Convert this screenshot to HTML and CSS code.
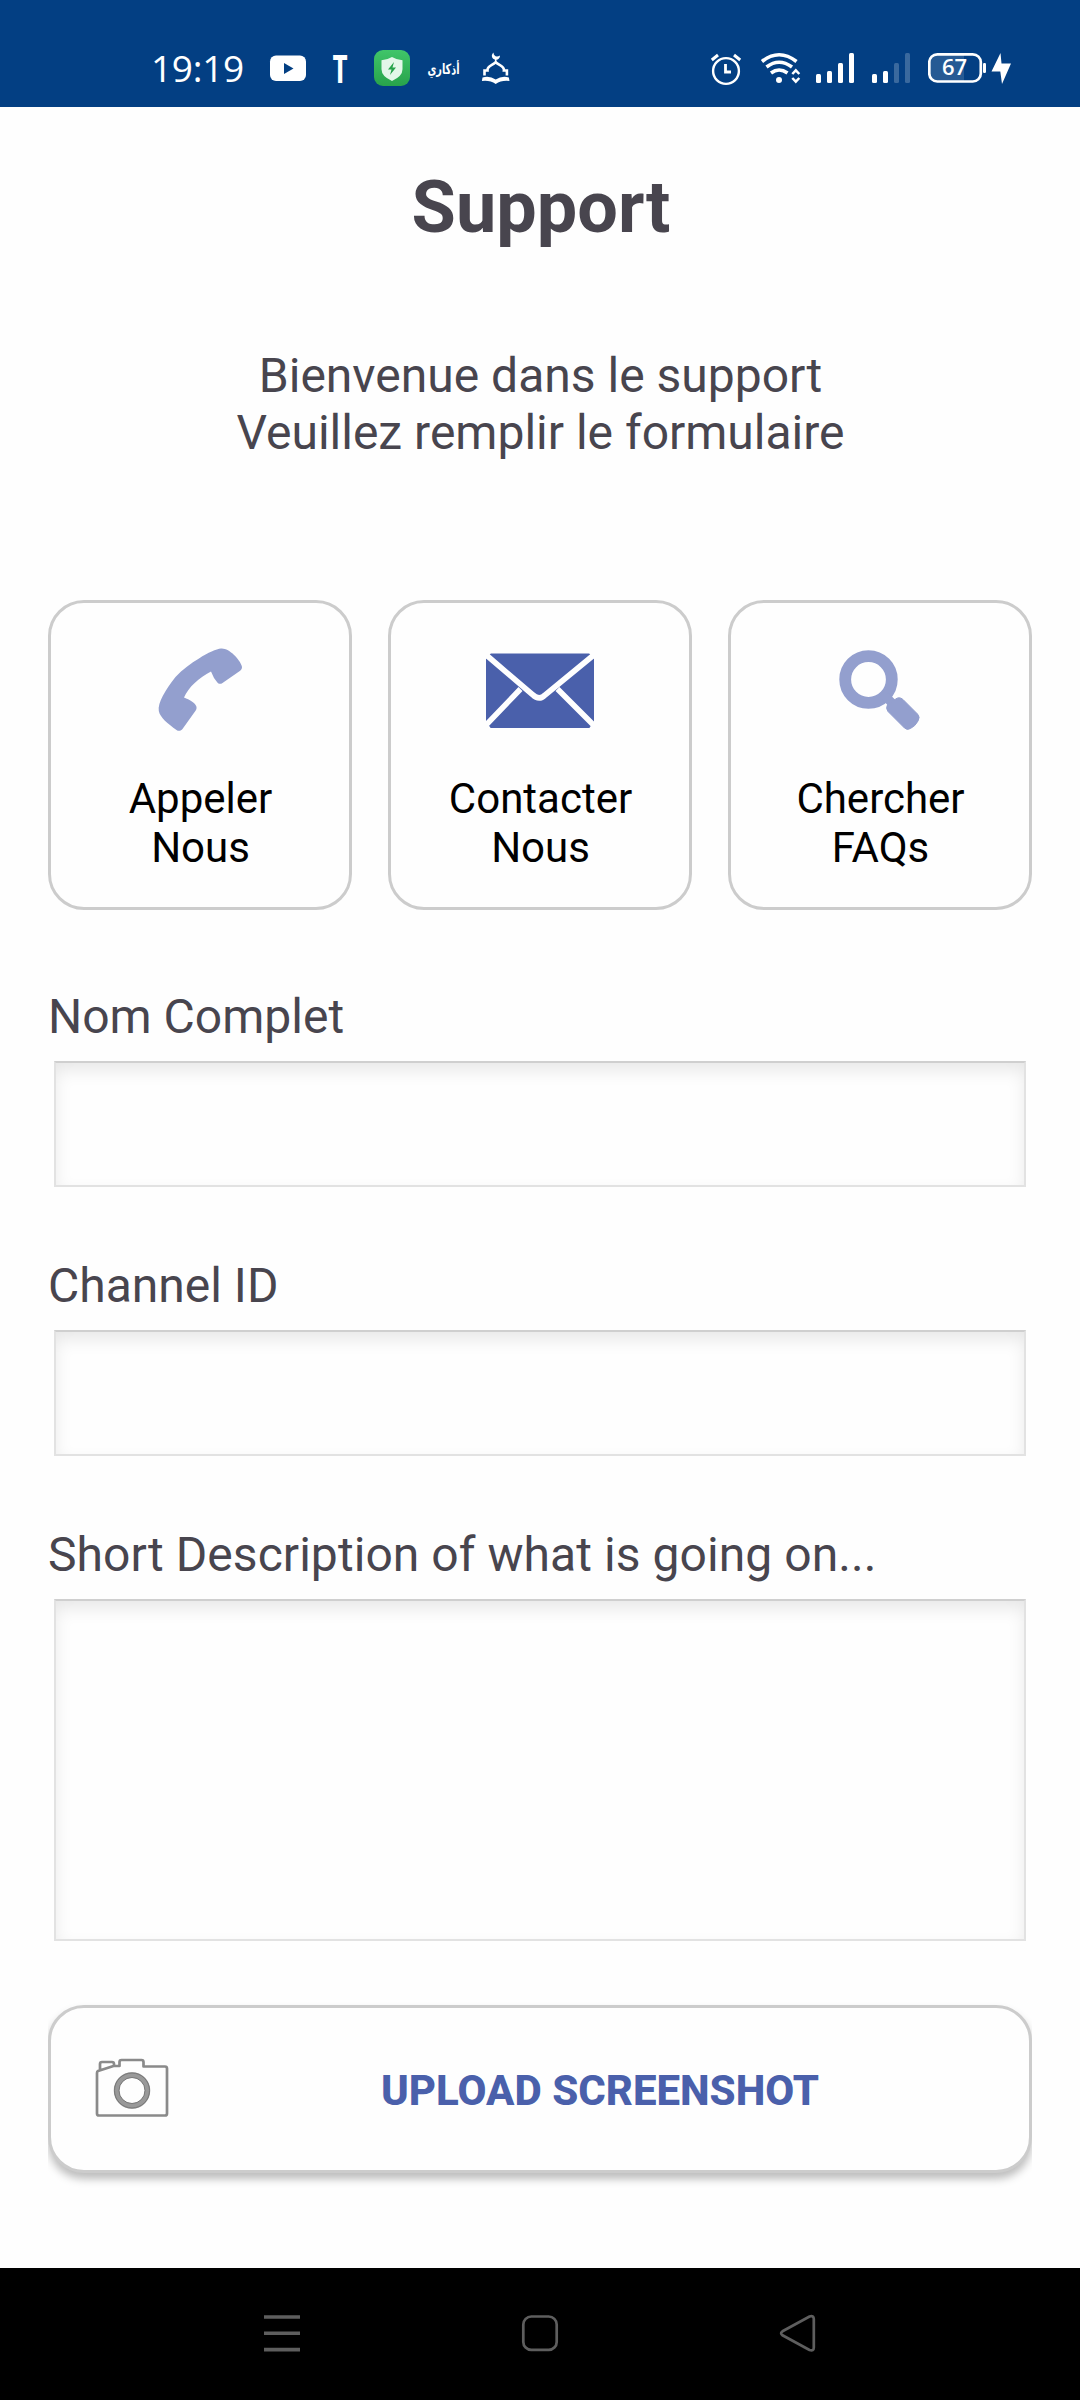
FILE: index.html
```html
<!DOCTYPE html>
<html lang="fr">
<head>
<meta charset="utf-8">
<title>Support</title>
<link rel="stylesheet" href="styles.css">
</head>
<body>
<header class="status">
  <span class="time">19:19</span>
  <svg class="youtube" width="38" height="107" viewBox="269 0 38 107"><rect x="270" y="55.500" width="36" height="25.500" rx="6" fill="#fff"/><path d="M284 63v11l9.500-5.500z" fill="#033f83"/></svg>
  <span class="app-letter">T</span>
  <svg class="shield" width="36" height="107" viewBox="374 0 36 107">
    <defs><linearGradient id="green" x1="0" y1="0" x2="0" y2="1"><stop offset="0" stop-color="#40c569"/><stop offset="1" stop-color="#28a34b"/></linearGradient></defs>
    <rect x="374" y="50" width="36" height="36" rx="9" fill="url(#green)"/>
    <path d="M392 57q-5 3-10.500 3.300v9q0 7 10.500 11.700 10.500-4.700 10.500-11.700v-9q-5.500-.3-10.500-3.300z" fill="#e3f7e9"/>
    <path d="M394 62l-6 7.500h3.500l-1.500 5.500 6-7.500h-3.500z" fill="#27a34b"/>
  </svg>
  <span class="arabic" lang="ar" dir="rtl">أذكاري</span>
  <svg class="mosque" width="30" height="107" viewBox="481 0 30 107" fill="none" stroke="#fff" stroke-width="2.600">
    <path d="M493.500 52.500c-3.500 3-1 7.500 2.700 7.300 2.300-.2 3.800-1.700 3.800-4.300-3.500 2-6.500.5-6.500-3z" fill="#fff" stroke="none"/>
    <path d="M495.700 58.500v4.500" stroke-width="1.600"/>
    <path d="M484.500 75.500v-5h3c-.5-5 4-4.500 8.200-8.200 4.200 3.700 8.700 3.200 8.200 8.200h3v5"/>
    <path d="M482.500 77.500q7-2 13.200 2 6.200-4 13.200-2l.6 3.500q-8-1-13.800 3-5.800-4-13.800-3z" fill="#fff" stroke="none"/>
  </svg>
  <svg class="alarm" width="32" height="107" viewBox="710 0 32 107" fill="none" stroke="#fff"><circle cx="726" cy="71" r="12.900" stroke-width="2.400"/><path d="M711.800 60l6.200-5M740.200 60l-6.200-5" stroke-width="3"/><path d="M725.500 64v8h5.500" stroke-width="2.800"/></svg>
  <svg class="wifi" width="42" height="107" viewBox="760 0 42 107" fill="none" stroke="#fff" stroke-width="3.600"><path d="M762 61.500q17-13.500 34.500 0M766.500 67q12.500-9.500 25.500 0M771 73q8-6 16.500 0"/><circle cx="779" cy="80" r="3" fill="#fff" stroke="none"/><path d="M792.300 74l3.500-3.700 3.500 3.700M792.300 78l3.500 3.700 3.500-3.700" stroke-width="2.500"/></svg>
  <svg class="signal" width="38" height="107" viewBox="816 0 38 107" fill="#fff"><rect x="816" y="74" width="5" height="9" rx="1.500"/><rect x="827" y="71" width="5" height="12" rx="1.500"/><rect x="838" y="63" width="5" height="20" rx="1.500"/><rect x="849" y="53" width="5" height="30" rx="1.500"/></svg>
  <svg class="signal second" width="38" height="107" viewBox="816 0 38 107" fill="#fff"><rect x="816" y="74" width="5" height="9" rx="1.500"/><rect x="827" y="71" width="5" height="12" rx="1.500"/><rect x="838" y="63" width="5" height="20" rx="1.500" opacity=".22"/><rect x="849" y="53" width="5" height="30" rx="1.500" opacity=".22"/></svg>
  <svg class="battery" width="84" height="107" viewBox="928 0 84 107"><path d="M964 54h-26q-8.500 0-8.500 8.500v10q0 8.500 8.500 8.500h26z" fill="#fff" opacity=".14"/><rect x="929.300" y="54.300" width="51.500" height="27.200" rx="8" fill="none" stroke="#fff" stroke-width="2.700"/><rect x="983" y="63" width="3" height="10" rx="1.200" fill="#fff"/><path d="M1000.500 53l-9 18.500h8.800l1.700 12.500 9-20.500h-9.500z" fill="#fff"/><text x="954.500" y="75.300" text-anchor="middle" class="level">67</text></svg>
</header>

<main class="page">
  <h1 class="title">Support</h1>
  <p class="welcome">Bienvenue dans le support<br>Veuillez remplir le formulaire</p>

  <section class="cards">
    <a class="card">
      <svg class="card-icon" width="108" height="108" viewBox="0 0 108 108"><path d="M53 21.500C62 15.500 70.500 12 75 11.500c8-.8 19 11 20.800 17.500.6 2.200-.2 3.700-2 5L76.500 46c-2 1.400-4 1-5.300-.7L68 41l-3-6.500C53 41 42.500 50 38 60.500c6 2.500 10 4.500 12.200 8.500.7 1.500.4 3-.5 4.500L36.500 92c-1.500 2-4 2.300-6 .9C22 87 14 80.500 12.800 74c-1.300-8 6.700-21.500 16.700-34C36.500 32.500 45 26 53 21.500z" fill="#939fce"/></svg>
      <span>Appeler<br>Nous</span>
    </a>
    <a class="card">
      <svg class="card-icon" width="108" height="108" viewBox="0 0 108 108"><rect y="16.500" width="108" height="74.500" fill="#4a60ab"/><path d="M-1 17L46.500 57.500Q53 64 59 58L109 17M34.500 52L-1 89M71.500 52L109 89.500" fill="none" stroke="#fefefe" stroke-width="5.600"/><path d="M0 16v6l5-6zM108 16v6l-5-6zM0 91.500v-7l5 7zM108 91.500v-7l-5 7z" fill="#fefefe"/></svg>
      <span>Contacter<br>Nous</span>
    </a>
    <a class="card">
      <svg class="card-icon" width="108" height="108" viewBox="0 0 108 108" fill="none" stroke="#939fce"><circle cx="42.500" cy="42.500" r="23.300" stroke-width="11.800"/><path d="M59 59l9 9" stroke-width="9"/><path d="M69 62.500q4-3.500 8 0L91.500 77q3 3 .5 7-2.500 5-7.500 7.500-3.500 2-6-.5L62 74.500q-2.500-3-.5-7z" fill="#939fce" stroke-width="1"/></svg>
      <span>Chercher<br>FAQs</span>
    </a>
  </section>

  <form class="form">
    <label class="group"><span class="label">Nom Complet</span><input class="field" type="text"></label>
    <label class="group"><span class="label">Channel ID</span><input class="field" type="text"></label>
    <label class="group"><span class="label long">Short Description of what is going on...</span><textarea class="field tall"></textarea></label>
    <div class="upload-wrap">
      <button class="upload" type="button">
        <svg class="camera" width="76" height="66" viewBox="0 0 76 66" fill="none" stroke="#8a8a8a" stroke-width="2.700" stroke-linejoin="round"><path d="M3 15L18.500 10h6V6q0-2 2-2h20q2 0 2 2v4.500h21.500q2 0 2 2v45q0 2-2 2H4q-2 0-2-2V17q0-1.500 1-2zM5 14V8q0-2 2-2h10q2 0 2 2v2"/><circle cx="37" cy="34.500" r="15.500" stroke="#999" stroke-width="5.500"/><circle cx="37" cy="34.500" r="17.500" stroke="#777" stroke-width="1"/><circle cx="37" cy="34.500" r="13" stroke="#777" stroke-width="1"/></svg>
        <span class="upload-text">UPLOAD SCREENSHOT</span>
      </button>
    </div>
  </form>
</main>

<nav class="navbar">
  <svg width="40" height="48" viewBox="0 0 40 48" stroke="#5e5e5e" stroke-width="3.600"><path d="M2 6h36M2 22.300h36M2 38.600h36"/></svg>
  <svg width="40" height="48" viewBox="0 0 40 48" fill="none" stroke="#5e5e5e" stroke-width="2.700"><rect x="3.300" y="5.500" width="33.400" height="33.400" rx="8"/></svg>
  <svg width="40" height="48" viewBox="0 0 40 48" fill="none" stroke="#5e5e5e" stroke-width="2.700"><path d="M4.500 20.300L31.500 5.600q4.300-1.500 4.300 2.500v28.400q0 4-4.300 2.500L4.500 24.300q-2.800-2 0-4z"/></svg>
</nav>
</body>
</html>
```
FILE: styles.css
```css
* { box-sizing: border-box; }
body {
  margin: 0;
  width: 1080px;
  height: 2400px;
  display: flex;
  flex-direction: column;
  background: #fefefe;
  color: #48454e;
  font-family: Roboto, sans-serif;
}
.status {
  height: 107px;
  display: flex;
  background: #033f83;
  color: #fff;
  overflow: hidden;
}
.status > * { flex: none; }
.time {
  width: 100px;
  margin-left: 151px;
  font: 400 37px/107px "Open Sans", sans-serif;
  padding-top: 14px;
  letter-spacing: -.3px;
}
.youtube { margin-left: 18px; }
.app-letter {
  width: 22px;
  margin-left: 22px;
  text-align: center;
  font: 800 37px/107px Lato, sans-serif;
  padding-top: 15px;
  transform: scaleX(.65);
}
.shield { margin-left: 23px; }
.arabic {
  display: flex;
  justify-content: center;
  width: 35px;
  margin-left: 16px;
  white-space: nowrap;
  font: 700 13px/107px "DejaVu Sans", sans-serif;
  padding-top: 14px;
  transform: scale(.75, 1.1);
}
.mosque { margin-left: 20px; }
.alarm { margin-left: 199px; }
.wifi { margin-left: 18px; }
.signal { margin-left: 14px; }
.signal.second { margin-left: 18px; }
.battery { margin-left: 18px; }
.level { font: 600 22px "Open Sans", sans-serif; fill: #fff; }

.page { flex: 1; padding: 59px 48px 0; }
.title {
  margin: 0;
  padding-left: 2px;
  text-align: center;
  font-size: 72px;
  font-weight: 700;
  line-height: 84px;
}
.welcome {
  margin: 97px 0 0;
  padding-left: 1px;
  text-align: center;
  font-size: 48px;
  line-height: 57px;
}
.cards {
  display: grid;
  grid-template-columns: repeat(3, 1fr);
  gap: 36px;
  margin-top: 139px;
}
.card {
  height: 310px;
  padding-top: 34px;
  display: flex;
  flex-direction: column;
  align-items: center;
  gap: 29px;
  border: 3px solid #ccc;
  border-radius: 36px;
  color: #000;
  text-align: center;
  font-size: 42px;
  line-height: 49px;
}
.card span { padding-left: 1px; }
.form { margin-top: 78px; }
.group { display: block; margin-bottom: 70px; }
.label { display: block; font-size: 48px; line-height: 57px; }
.label.long { letter-spacing: .06px; }
.field {
  display: block;
  width: 972px;
  height: 126px;
  margin: 16px 6px 0;
  padding: 20px;
  border: 2px solid #e2e2e2;
  border-top-color: #cfcfcf;
  background: #fefefe;
  box-shadow: inset 0 8px 18px -2px rgba(0, 0, 0, .1);
  font: 48px Roboto, sans-serif;
  outline: none;
  resize: none;
}
.tall { height: 342px; }
.upload-wrap {
  margin-top: -6px;
  height: 190px;
  overflow-x: clip;
}
.upload {
  width: 984px;
  height: 168px;
  padding: 0 0 0 44px;
  display: flex;
  align-items: center;
  border: 3px solid #ccc;
  border-radius: 36px;
  background: #fefefe;
  box-shadow: 0 6px 9px rgba(0, 0, 0, .26);
  font-family: inherit;
}
.camera { flex: none; }
.upload-text {
  flex: 1;
  padding: 2px 0 0;
  text-align: center;
  color: #4a60ab;
  font-size: 42px;
  font-weight: 800;
  line-height: 49px;
}
.navbar {
  height: 132px;
  display: flex;
  justify-content: center;
  gap: 218px;
  padding-top: 43px;
  background: #000;
}
```
